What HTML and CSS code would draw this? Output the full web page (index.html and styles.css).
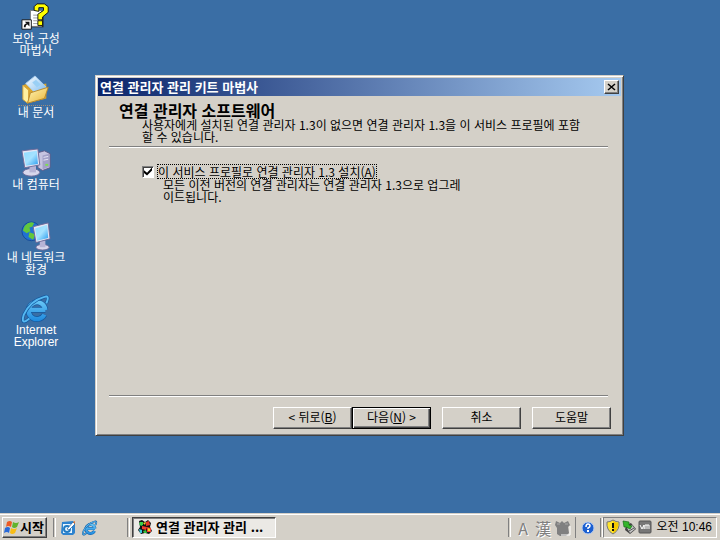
FILE: index.html
```
<!DOCTYPE html>
<html lang="ko">
<head>
<meta charset="utf-8">
<title>연결 관리자 관리 키트 마법사</title>
<link rel="stylesheet" href="styles.css">
</head>
<body>
<main class="desktop">
  <nav class="shortcuts">
    <a class="shortcut" href="#">
      <svg class="shortcut-icon" viewBox="0 0 32 32" aria-hidden="true">
        <path d="M11 10h13v17H11z" fill="#222"/><path d="M10 9h12v17H10z" fill="#fff" stroke="#777"/>
        <path d="M13 14h7M13 17h7M13 20h7M13 23h7" stroke="#999"/>
        <path d="M14 9V5l3-3h8l4 3v6l-6 5v3h-5v-6l6-4V6h-5v4z" fill="#ff0" stroke="#111"/>
        <path d="M18 20h5v5h-5z" fill="#ff0" stroke="#111"/>
        <path d="M1 19h10v10H1z" fill="#fff" stroke="#111"/>
        <path d="M3 27q0-4 3-4l-2-2h5v5l-2-2q-2 0-2 3z" fill="#111"/>
      </svg>
      <span>보안 구성<br>마법사</span>
    </a>
    <a class="shortcut" href="#">
      <svg class="shortcut-icon" viewBox="0 0 32 32" aria-hidden="true">
        <defs><linearGradient id="folder" x2="1" y2="1"><stop stop-color="#fff6b8"/><stop offset="1" stop-color="#e9b437"/></linearGradient>
        <linearGradient id="paper" x2="1" y2="1"><stop stop-color="#fff"/><stop offset="1" stop-color="#6fb5ee"/></linearGradient></defs>
        <path d="M2 11l5-2 4 3 16-3v16L7 30l-5-4z" fill="#d9a42c"/>
        <path d="M5 9L15 1l12 12-9 9z" fill="url(#paper)" stroke="#a9cdef"/>
        <path d="M12 8l4-3 5 5-4 3z" fill="#9ad0f5"/>
        <path d="M2 11l6 5v11l-1 3-5-4z" fill="#fff0a0" stroke="#d7a53c"/>
        <path d="M7 30l3-11 19-6-4 12z" fill="url(#folder)" stroke="#b9872a"/>
      </svg>
      <span class="selected">내 문서</span>
    </a>
    <a class="shortcut" href="#">
      <svg class="shortcut-icon" viewBox="0 0 32 32" aria-hidden="true">
        <defs><linearGradient id="screen" x2="1" y2="1"><stop stop-color="#8fdcff"/><stop offset=".5" stop-color="#a5e2ff"/><stop offset="1" stop-color="#279bee"/></linearGradient></defs>
        <path d="M18 5l7-2 6 3v15l-8 3-5-3z" fill="#c6c4e0" stroke="#5d5a86"/>
        <path d="M23 8l7-2v14l-7 3z" fill="#a3a1c8"/><path d="M24 10l5-1M24 13l5-1" stroke="#e9e8f7"/>
        <path d="M26 17h3v2h-3z" fill="#7ee04a"/>
        <ellipse cx="11" cy="26" rx="9" ry="4" fill="#d8d7ec" stroke="#6f6b99"/>
        <path d="M9 19h7v7H9z" fill="#b7b4d6"/>
        <path d="M1 3l17-2 2 17-16 3z" fill="#e6e6f4" stroke="#6f6b99"/>
        <path d="M3 5l14-2 1 14-13 2z" fill="url(#screen)"/>
      </svg>
      <span>내 컴퓨터</span>
    </a>
    <a class="shortcut" href="#">
      <svg class="shortcut-icon" viewBox="0 0 32 32" aria-hidden="true">
        <circle cx="11" cy="11" r="10" fill="#2172d2" stroke="#164b98"/>
        <path d="M4 5q5-5 10-3l-2 4-3 1 1 4-4 2-4-3zM9 12l6 2-2 6-5-3z" fill="#62c83c"/>
        <ellipse cx="23" cy="28" rx="7" ry="3" fill="#d8d7ec" stroke="#6f6b99"/>
        <path d="M20 21h6v7h-6z" fill="#b7b4d6"/>
        <path d="M13 6l16-4 2 17-15 4z" fill="#e6e6f4" stroke="#6f6b99"/>
        <path d="M15 8l13-4 1 14-12 3z" fill="url(#screen)"/>
      </svg>
      <span>내 네트워크<br>환경</span>
    </a>
    <a class="shortcut" href="#">
      <svg class="shortcut-icon" viewBox="0 0 32 32" aria-hidden="true">
        <defs>
          <linearGradient id="ie" gradientUnits="userSpaceOnUse" x1="0" y1="2" x2="0" y2="30"><stop stop-color="#7bd6fb"/><stop offset="1" stop-color="#1a86dd"/></linearGradient>
          <g id="ie-mark" fill="none">
            <path d="M26 17H10M25 22A9 9 0 1 1 26 17" stroke="#14599f" stroke-width="6"/>
            <path d="M26 17H10M25 22A9 9 0 1 1 26 17" stroke="url(#ie)" stroke-width="4.5"/>
            <path d="M27 10Q31 1 25 3 10 7 3 22 0 31 5 29L9 26" stroke="#14599f" stroke-width="3.5"/>
            <path d="M27 10Q31 1 25 3 10 7 3 22 0 31 5 29L9 26" stroke="#56b9f2" stroke-width="2"/>
          </g>
        </defs>
        <use href="#ie-mark"/>
      </svg>
      <span>Internet<br>Explorer</span>
    </a>
  </nav>

  <form class="dialog" role="dialog" aria-labelledby="dialog-title">
    <header class="titlebar">
      <h1 id="dialog-title">연결 관리자 관리 키트 마법사</h1>
      <button class="close" type="button" aria-label="닫기">
        <svg viewBox="0 0 9 8" aria-hidden="true"><path d="M1 1l7 6M8 1L1 7" stroke="#000" stroke-width="1.5"/></svg>
      </button>
    </header>
    <section class="intro">
      <h2>연결 관리자 소프트웨어</h2>
      <p>사용자에게 설치된 연결 관리자 1.3이 없으면 연결 관리자 1.3을 이 서비스 프로필에 포함<br>할 수 있습니다.</p>
    </section>
    <section class="options">
      <div class="option">
        <input type="checkbox" id="install" checked>
        <label for="install">이 서비스 프로필로 연결 관리자 1.3 설치(<u>A</u>)</label>
      </div>
      <p>모든 이전 버전의 연결 관리자는 연결 관리자 1.3으로 업그레<br>이드됩니다.</p>
    </section>
    <footer class="actions">
      <div class="steps">
        <button class="button" type="button">&lt; 뒤로(<u>B</u>)</button>
        <button class="button default" type="button">다음(<u>N</u>) &gt;</button>
      </div>
      <button class="button" type="button">취소</button>
      <button class="button" type="button">도움말</button>
    </footer>
  </form>
</main>

<footer class="taskbar">
  <button class="start" type="button">
    <svg viewBox="0 0 16 16" aria-hidden="true">
      <path d="M3 3q3-2 5 0L7 8Q4 6 2 8z" fill="#ec5a24"/><path d="M9 3q3 2 6 0l-2 5q-3 2-5 0z" fill="#62b32e"/>
      <path d="M1 9q3-2 5 0l-1 5q-2-2-5 0z" fill="#2869d8"/><path d="M7 9q3 2 6 0l-2 5q-3 2-5 0z" fill="#f8bd16"/>
    </svg>시작
  </button>
  <span class="grip"></span>
  <div class="quick">
    <button type="button" aria-label="바탕 화면 보기">
      <svg viewBox="0 0 16 16" aria-hidden="true">
        <path d="M2 2l11-1 2 2v10l-2 2H3l-2-2z" fill="#2d83cf"/><path d="M3 4h9v9H3z" fill="#e8f6ff"/>
        <circle cx="7" cy="9" r="3" fill="none" stroke="#207bc4" stroke-width="2"/><path d="M7 9l6-7 2 2-6 6z" fill="#fff" stroke="#145a9e" stroke-width=".7"/><path d="M13 2l2-1v3z" fill="#e8762d"/>
      </svg>
    </button>
    <button type="button" aria-label="Internet Explorer">
      <svg viewBox="0 0 32 32" aria-hidden="true"><use href="#ie-mark"/></svg>
    </button>
  </div>
  <span class="grip"></span>
  <button class="task" type="button">
    <svg viewBox="0 0 16 16" aria-hidden="true">
      <path d="M2 2l3-1 3 2 3-2 3 3-1 4 2 4-3 3-4-1-4 1-3-4 2-3z" fill="#111"/>
      <path d="M3 3h3v3l-2 1-2-2z" fill="#39d04a"/><path d="M9 3l3-1 1 4-4 1z" fill="#e63427"/><path d="M5 7l5 1-1 3-4-1z" fill="#f03d2d"/>
      <path d="M2 10l3 1v3H3z" fill="#36c9de"/><path d="M10 8l4 1v4h-4z" fill="#f03d2d"/><path d="M6 12l3-1 1 3H7z" fill="#36bf3a"/><path d="M6 4l3-1-1 3z" fill="#f5d41d"/><path d="M11 9l2 1v2h-2z" fill="#f5d41d"/>
    </svg>연결 관리자 관리 ...
  </button>
  <div class="language">
    <span class="grip"></span>
    <span class="mode">A</span>
    <span class="mode">漢</span>
    <svg viewBox="0 0 16 16" aria-hidden="true"><path d="M1 1l4 2 2-2 2 2 4-2 2 4-2 2 1 6-3 3H5l-3-2V8L0 5z" fill="#808080"/><path d="M2 4h3M10 4h3" stroke="#aaa"/><path d="M15 6v9H6" fill="none" stroke="#fff"/></svg>
    <span class="line"></span>
    <svg class="help" viewBox="0 0 16 16" aria-hidden="true"><circle cx="8" cy="8" r="6" fill="#1b5fd0" stroke="#b7cdf0"/><path d="M6 7q0-3 2-3t2 2q0 1-2 2v1" fill="none" stroke="#fff" stroke-width="1.5"/><path d="M7 10h2v2H7z" fill="#fff"/></svg>
    <span class="grip"></span>
  </div>
  <div class="tray">
    <svg viewBox="0 0 16 16" aria-hidden="true"><path d="M8 1q3 2 6 2 1 8-6 12Q1 11 2 3q3 0 6-2z" fill="#ffe52e" stroke="#777"/><path d="M8 2q3 2 5 2 1 7-5 10z" fill="#f5c900"/><path d="M7 4h2v5H7zM7 10h2v2H7z" fill="#111"/></svg>
    <svg viewBox="0 0 16 16" aria-hidden="true"><path d="M5 6l5-2 5 6-6 5-5-4z" fill="#444"/><path d="M6 9l5-3 3 4-5 4z" fill="#c8c8c8"/><path d="M2 2l6 1v3l3 1-2 3-4-2H3z" fill="#35b52b" stroke="#176d18" stroke-width=".7"/><path d="M8 12l5-3" stroke="#555"/></svg>
    <svg viewBox="0 0 16 16" aria-hidden="true"><rect x="2" y="2" width="12" height="12" rx="1" fill="#777" stroke="#555"/><path d="M3 6l2 4 2-4v4M8 10V6h4v4M10 6v4" fill="none" stroke="#fff"/></svg>
    <time>오전 10:46</time>
  </div>
</footer>
</body>
</html>
```
FILE: styles.css
```
* { box-sizing: border-box; }

body {
  display: flex;
  flex-direction: column;
  min-height: 100vh;
  margin: 0;
  background: #3a6ea5;
  color: #000;
  font: 12px/12px "Noto Sans CJK KR", "Liberation Sans", sans-serif;
}

h1, h2, p { margin: 0; }

button {
  margin: 0;
  padding: 0;
  border: 0;
  background: none;
  color: inherit;
  font: inherit;
}

svg { display: block; flex: none; }

.desktop {
  display: grid;
  flex: 1;
  grid-template-columns: 72px minmax(0, 529px) 73px;
  justify-content: space-between;
  align-items: center;
  padding-bottom: 2px;
}

.shortcuts {
  display: grid;
  grid-auto-rows: 73px;
  align-self: start;
  padding-top: 2px;
}

.shortcut {
  display: flex;
  flex-direction: column;
  align-items: center;
  color: #fff;
  text-align: center;
  text-decoration: none;
  white-space: nowrap;
}

.shortcut:last-child { font-family: "Liberation Sans", sans-serif; }
.shortcut-icon { width: 30px; height: 30px; }
.selected { border-top: 1px dotted #a08c78; }

.dialog {
  display: flex;
  flex-direction: column;
  min-height: 361px;
  padding: 1px;
  border: 1px solid;
  border-color: #d4d0c8 #404040 #404040 #d4d0c8;
  background: #d4d0c8;
  box-shadow: inset 1px 1px #fff, inset -1px -1px #808080;
}

.titlebar {
  display: flex;
  align-items: center;
  justify-content: space-between;
  height: 18px;
  margin: 1px;
  padding: 0 2px;
  background: linear-gradient(90deg, #0a246a, #a6caf0);
  color: #fff;
}

h1 { font-size: 13px; line-height: 16px; }

.close, .button, .start {
  border: 1px solid;
  border-color: #fff #404040 #404040 #fff;
  background: #d4d0c8;
  box-shadow: inset -1px -1px #808080;
}

.close {
  display: grid;
  place-items: center;
  width: 15px;
  height: 14px;
}

.close svg { width: 9px; height: 8px; }

.intro {
  margin: 0 14px 0 12px;
  padding: 5px 0 3px 10px;
  border-bottom: 1px solid #808080;
  box-shadow: 0 1px #fff;
}

h2 { font-size: 16px; line-height: 17px; }
.intro p { padding-left: 23px; }

.options {
  flex: 1;
  padding: 18px 14px 0 45px;
}

.option { display: flex; align-items: center; gap: 4px; }

.option input {
  display: grid;
  place-items: center;
  appearance: none;
  width: 12px;
  height: 12px;
  margin: 0;
  border: 1px solid;
  border-color: #808080 #fff #fff #808080;
  background: #fff;
  box-shadow: inset 1px 1px #404040;
}

.option input:checked::before {
  content: "";
  width: 8px;
  height: 8px;
  background: #000;
  clip-path: polygon(0 35%, 38% 65%, 100% 0, 100% 38%, 38% 100%, 0 70%);
}

.option label { line-height: 13px; outline: 1px dotted #000; }
.options p { padding: 1px 0 0 21px; }

.actions {
  display: flex;
  justify-content: flex-end;
  gap: 11px;
  margin: 0 14px 0 12px;
  padding: 11px 0 5px;
  border-top: 1px solid #808080;
  box-shadow: inset 0 1px #fff;
}

.actions > :last-child { margin-right: -3px; }
.steps { display: flex; }
.button { width: 79px; height: 22px; padding-bottom: 3px; }
.default { border-color: #000; box-shadow: inset 1px 1px #fff, inset -1px -1px #404040, inset -2px -2px #808080; }

.taskbar {
  display: flex;
  align-items: stretch;
  height: 27px;
  padding: 3px 3px 2px 2px;
  border-top: 1px solid #d4d0c8;
  background: #d4d0c8;
  box-shadow: inset 0 1px #fff;
  white-space: nowrap;
}

.taskbar svg { width: 16px; height: 16px; }

.start, .task {
  display: flex;
  align-items: center;
  font-size: 13px;
  font-weight: bold;
}

.start { width: 45px; padding: 0 0 1px 1px; }

.grip {
  width: 3px;
  margin: 1px 0;
  border-left: 1px solid #808080;
  border-right: 1px solid #fff;
}

.start + .grip { margin-left: 6px; }
.quick { display: flex; gap: 6px; width: 71px; padding-left: 4px; align-items: center; }

.task {
  gap: 3px;
  width: 144px;
  margin-left: 2px;
  padding: 0 0 1px 4px;
  border: 1px solid;
  border-color: #404040 #fff #fff #404040;
  background: #ebe9e5;
  box-shadow: inset 1px 1px #808080;
}

.language {
  display: flex;
  align-items: center;
  gap: 4px;
  margin-left: auto;
  color: #808080;
}

.language .grip, .line { align-self: stretch; }
.line { border-left: 1px solid #808080; }
.mode { width: 16px; font-size: 16px; line-height: 16px; text-align: center; text-shadow: 1px 1px #fff; }

.tray {
  display: flex;
  align-items: center;
  width: 114px;
  padding: 0 4px 1px 1px;
  border: 1px solid;
  border-color: #808080 #fff #fff #808080;
}

.tray time { margin-left: auto; font-family: "Liberation Sans", "Noto Sans CJK KR", sans-serif; }
```
